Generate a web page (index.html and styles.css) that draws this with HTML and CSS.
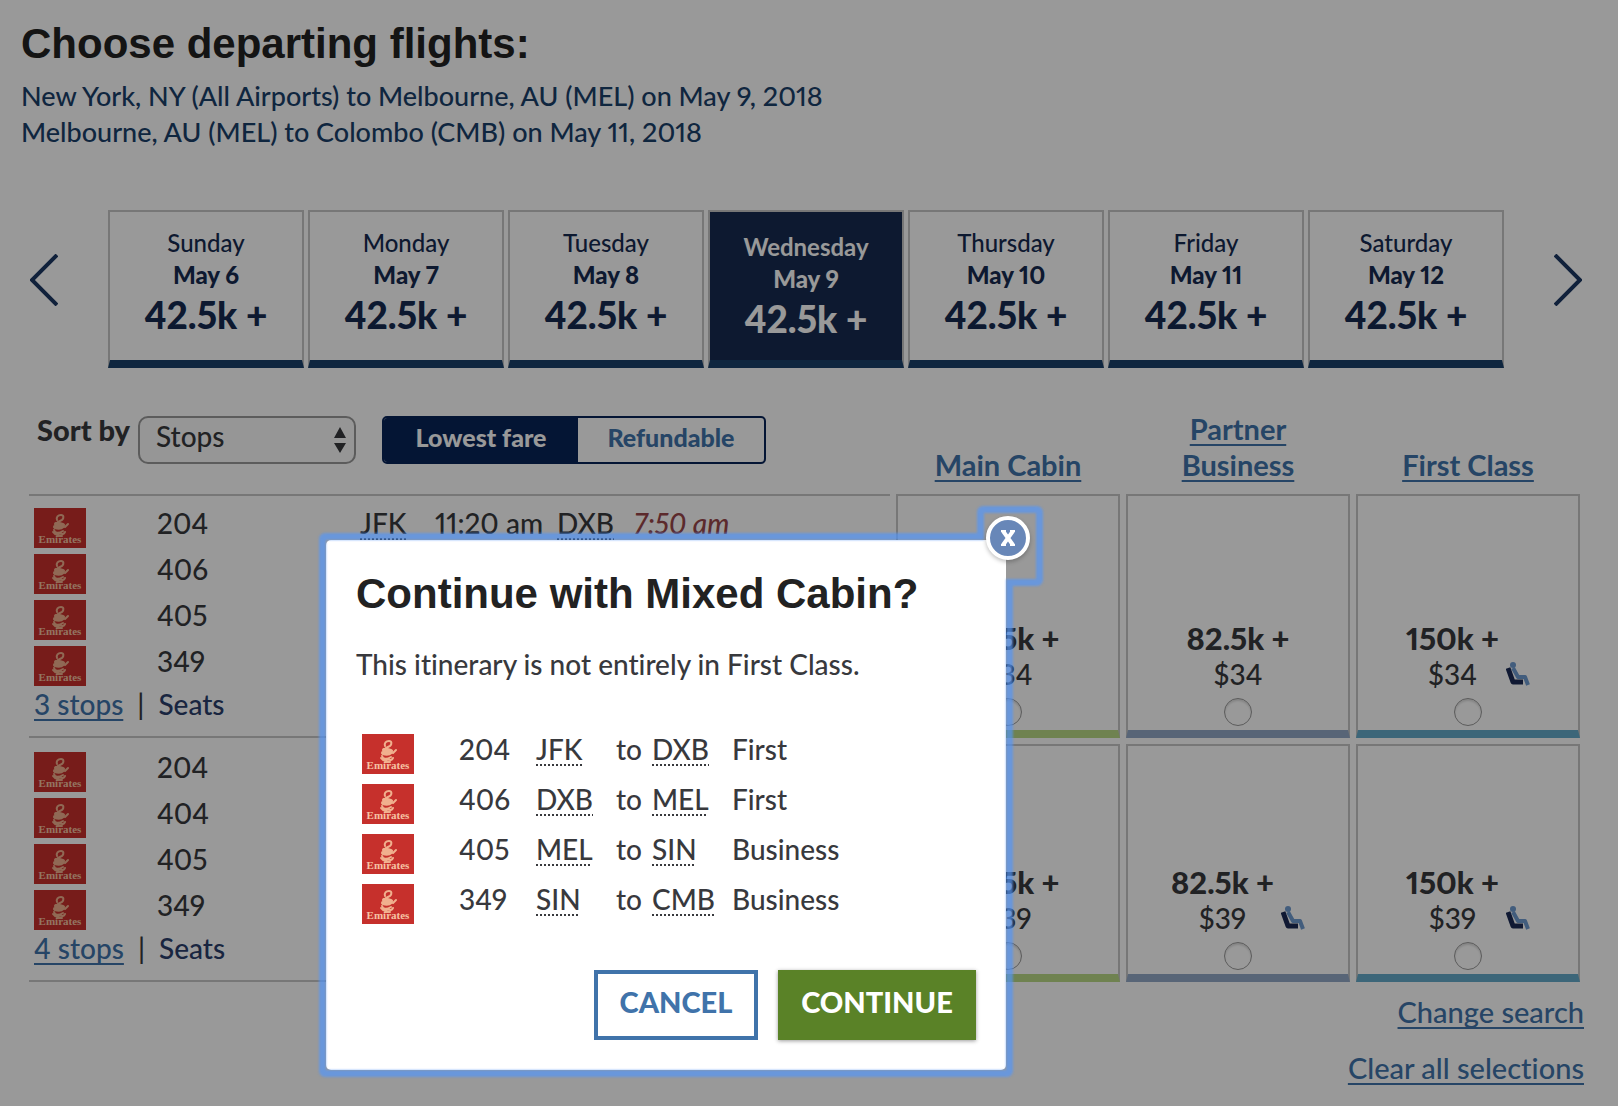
FILE: index.html
```html
<!DOCTYPE html>
<html lang="en">
<head>
<meta charset="utf-8">
<title>Choose departing flights</title>
<link rel="stylesheet" href="styles.css">
</head>
<body>
<svg class="sprite" aria-hidden="true">
  <symbol id="emirates" viewBox="0 0 52 40">
    <rect width="52" height="40" fill="#c6302c"/>
    <g fill="none" stroke="#f0b08e" stroke-linecap="round">
      <path d="M23 12c-1-3 1-5 4-5s3 3 1 5l-4 2" stroke-width="2"/>
      <path d="M22 16c3-1 5 0 7 1M21 19c3 1 6 1 8-1" stroke-width="4"/>
      <path d="M31 19l3-3M20 22c1 3 4 4 9 1M19 24c3 4 5 3 7 1c2 2 4 1 5-1M23 28h5" stroke-width="2"/>
    </g>
  </symbol>
  <symbol id="seat" viewBox="0 0 24 24">
    <path d="M2 6l5 14h10" fill="none" stroke="#1b2b55" stroke-width="5" stroke-linejoin="round"/>
    <circle cx="7" cy="3" r="3" fill="#6f9bd0"/>
    <path d="M7 6l5 9h7l3 8" fill="none" stroke="#6f9bd0" stroke-width="4" stroke-linejoin="round"/>
  </symbol>
</svg>

<main class="page">
  <header class="intro">
    <h1>Choose departing flights:</h1>
    <p>New York, NY (All Airports) to Melbourne, AU (MEL) on May 9, 2018<br>Melbourne, AU (MEL) to Colombo (CMB) on May 11, 2018</p>
  </header>

  <nav class="days" aria-label="Departure day">
    <button class="arrow" aria-label="Previous days"><svg width="28" height="52" viewBox="0 0 28 52"><path d="M27 1L2 26l25 25"/></svg></button>
    <div class="day-list">
      <button class="day"><span>Sunday</span><b>May 6</b><strong>42.5k +</strong></button>
      <button class="day"><span>Monday</span><b>May 7</b><strong>42.5k +</strong></button>
      <button class="day"><span>Tuesday</span><b>May 8</b><strong>42.5k +</strong></button>
      <button class="day selected"><span>Wednesday</span><b>May 9</b><strong>42.5k +</strong></button>
      <button class="day"><span>Thursday</span><b>May 10</b><strong>42.5k +</strong></button>
      <button class="day"><span>Friday</span><b>May 11</b><strong>42.5k +</strong></button>
      <button class="day"><span>Saturday</span><b>May 12</b><strong>42.5k +</strong></button>
    </div>
    <button class="arrow" aria-label="Next days"><svg width="28" height="52" viewBox="0 0 28 52"><path d="M1 1l25 25L1 51"/></svg></button>
  </nav>

  <table class="results">
    <thead>
      <tr>
        <td>
          <div class="controls">
            <label for="sort">Sort by</label>
            <div class="select">
              <select id="sort"><option>Stops</option></select>
              <svg width="14" height="26" viewBox="0 0 14 26"><path d="M7 0l6 11H1zM7 26l6-10H1z"/></svg>
            </div>
            <div class="toggle">
              <button class="on">Lowest fare</button><button>Refundable</button>
            </div>
          </div>
        </td>
        <th class="fare-col" scope="col"><a href="#">Main Cabin</a></th>
        <th class="fare-col" scope="col"><a href="#">Partner<br>Business</a></th>
        <th class="fare-col" scope="col"><a href="#">First Class</a></th>
      </tr>
    </thead>
    <tbody>
      <tr class="first">
        <td class="flight">
          <div class="leg"><svg class="logo" viewBox="0 0 52 40"><use href="#emirates"/><text x="26" y="35">Emirates</text></svg><span>204</span><span class="route"><abbr title="New York">JFK</abbr><span>11:20 am</span><abbr title="Dubai">DXB</abbr><em>7:50 am</em></span></div>
          <div class="leg"><svg class="logo" viewBox="0 0 52 40"><use href="#emirates"/><text x="26" y="35">Emirates</text></svg><span>406</span></div>
          <div class="leg"><svg class="logo" viewBox="0 0 52 40"><use href="#emirates"/><text x="26" y="35">Emirates</text></svg><span>405</span></div>
          <div class="leg"><svg class="logo" viewBox="0 0 52 40"><use href="#emirates"/><text x="26" y="35">Emirates</text></svg><span>349</span></div>
          <div class="more"><a href="#">3 stops</a><span>|</span><a class="seats" href="#">Seats</a></div>
        </td>
        <td class="fare main"><label><span class="price"><span class="amount"><b>42.5k +</b><span>$34</span></span></span><input type="radio" name="fare"></label></td>
        <td class="fare business"><label><span class="price"><span class="amount"><b>82.5k +</b><span>$34</span></span></span><input type="radio" name="fare"></label></td>
        <td class="fare top"><label><span class="price"><span class="amount"><b>150k +</b><span>$34</span></span><svg class="seat"><use href="#seat"/></svg></span><input type="radio" name="fare"></label></td>
      </tr>
      <tr>
        <td class="flight">
          <div class="leg"><svg class="logo" viewBox="0 0 52 40"><use href="#emirates"/><text x="26" y="35">Emirates</text></svg><span>204</span></div>
          <div class="leg"><svg class="logo" viewBox="0 0 52 40"><use href="#emirates"/><text x="26" y="35">Emirates</text></svg><span>404</span></div>
          <div class="leg"><svg class="logo" viewBox="0 0 52 40"><use href="#emirates"/><text x="26" y="35">Emirates</text></svg><span>405</span></div>
          <div class="leg"><svg class="logo" viewBox="0 0 52 40"><use href="#emirates"/><text x="26" y="35">Emirates</text></svg><span>349</span></div>
          <div class="more"><a href="#">4 stops</a><span>|</span><a class="seats" href="#">Seats</a></div>
        </td>
        <td class="fare main"><label><span class="price"><span class="amount"><b>42.5k +</b><span>$39</span></span></span><input type="radio" name="fare"></label></td>
        <td class="fare business"><label><span class="price"><span class="amount"><b>82.5k +</b><span>$39</span></span><svg class="seat"><use href="#seat"/></svg></span><input type="radio" name="fare"></label></td>
        <td class="fare top"><label><span class="price"><span class="amount"><b>150k +</b><span>$39</span></span><svg class="seat"><use href="#seat"/></svg></span><input type="radio" name="fare"></label></td>
      </tr>
    </tbody>
  </table>

  <footer class="actions">
    <a href="#">Change search</a>
    <a href="#">Clear all selections</a>
  </footer>
</main>

<div class="backdrop"></div>
<section class="modal" role="dialog" aria-modal="true" aria-labelledby="modal-title">
  <div class="focus-ring" aria-hidden="true"><i class="frame"></i><i class="corner"></i></div>
  <button class="close" aria-label="Close"><svg width="16" height="16" viewBox="0 0 16 16"><path d="M3 1l10 14M13 1L3 15" stroke-width="4"/><path d="M1 1h5M10 1h5M1 15h5M10 15h5" stroke-width="2"/></svg></button>
  <h2 id="modal-title">Continue with Mixed Cabin?</h2>
  <p>This itinerary is not entirely in First Class.</p>
  <table class="cabins">
    <tr><td><svg class="logo" viewBox="0 0 52 40"><use href="#emirates"/><text x="26" y="35">Emirates</text></svg></td><td>204</td><td><abbr title="New York">JFK</abbr></td><td>to</td><td><abbr title="Dubai">DXB</abbr></td><td>First</td></tr>
    <tr><td><svg class="logo" viewBox="0 0 52 40"><use href="#emirates"/><text x="26" y="35">Emirates</text></svg></td><td>406</td><td><abbr title="Dubai">DXB</abbr></td><td>to</td><td><abbr title="Melbourne">MEL</abbr></td><td>First</td></tr>
    <tr><td><svg class="logo" viewBox="0 0 52 40"><use href="#emirates"/><text x="26" y="35">Emirates</text></svg></td><td>405</td><td><abbr title="Melbourne">MEL</abbr></td><td>to</td><td><abbr title="Singapore">SIN</abbr></td><td>Business</td></tr>
    <tr><td><svg class="logo" viewBox="0 0 52 40"><use href="#emirates"/><text x="26" y="35">Emirates</text></svg></td><td>349</td><td><abbr title="Singapore">SIN</abbr></td><td>to</td><td><abbr title="Colombo">CMB</abbr></td><td>Business</td></tr>
  </table>
  <div class="modal-actions">
    <button class="cancel">CANCEL</button>
    <button class="continue">CONTINUE</button>
  </div>
</section>
</body>
</html>
```
FILE: styles.css
```css
:root {
  --ink: #38393d;
  --navy: #162b50;
  --blue: #19406a;
  --link: #4073aa;
  --line: #c6c6c6;
}

* { box-sizing: border-box; }

body {
  margin: 0;
  background: #fff;
  color: var(--ink);
  font: 500 28px/36px Lato, "Open Sans", sans-serif;
  font-variant-ligatures: none;
  font-variant-numeric: proportional-nums;
}

button, select { font: inherit; cursor: pointer; }
a { color: var(--link); text-underline-offset: 4px; text-decoration-thickness: 2px; text-decoration-skip-ink: none; }
p, h1, h2 { margin: 0; }
h1, h2 { color: #222; font: bold 42px/48px "Liberation Sans", Arial, sans-serif; }
abbr { text-decoration: underline dotted 2px; text-underline-offset: 4px; text-decoration-skip-ink: none; }

.sprite { display: none; }
.logo { display: block; width: 52px; height: 40px; }
.logo text { font: bold 11px "Liberation Serif", serif; fill: #f6c3a4; text-anchor: middle; }

/* Heading and day picker */
.intro { padding: 20px 21px 0; }
.intro p { margin-top: 10px; color: var(--blue); font-size: 27px; }

.days { display: flex; align-items: center; gap: 50px; margin-top: 60px; padding: 0 36px 0 30px; }
.arrow { width: 28px; height: 52px; padding: 0; border: 0; background: none; margin-bottom: 18px; }
.arrow svg { display: block; fill: none; stroke: #1c3763; stroke-width: 4px; }
.day-list { flex: 1; display: grid; grid-template-columns: repeat(7, 1fr); gap: 4px; }
.day {
  display: flex; flex-direction: column; align-items: center;
  height: 158px; padding: 15px 0 0;
  border: 2px solid var(--line); border-bottom: 8px solid var(--blue);
  background: none; color: var(--navy); font-size: 24px; line-height: 32px;
}
.day strong { font-size: 37px; line-height: 48px; font-weight: 900; }
.day b { font-weight: 900; }
.day.selected { padding-top: 19px; background: var(--navy); color: #fff; font-weight: bold; }

/* Results */
.results { width: calc(100% - 55px); margin: 37px 32px 0 23px; border-spacing: 6px; table-layout: fixed; }
.results td, .results th { padding: 0; vertical-align: top; }
.fare-col { width: 224px; }
.results th { padding-bottom: 5px; vertical-align: bottom; font-size: 29px; }

.controls { display: flex; align-items: flex-start; padding: 5px 0 0 8px; }
.controls label { width: 101px; font-size: 29px; font-weight: 900; line-height: 28px; white-space: nowrap; }
.select { position: relative; width: 218px; margin-right: 26px; }
.select select {
  display: block; width: 100%; height: 48px; padding: 0 40px 8px 16px;
  appearance: none; border: 2px solid #999; border-radius: 10px; background: #fafafa; color: var(--ink);
}
.select svg { position: absolute; right: 9px; top: 11px; fill: var(--ink); pointer-events: none; }
.toggle { display: flex; width: 384px; height: 48px; border: 2px solid #072358; border-radius: 5px; overflow: hidden; }
.toggle button { flex: 1; padding: 0 0 6px; border: 0; background: none; color: var(--link); font-size: 25px; font-weight: 900; line-height: 32px; }
.toggle .on { flex: 0 0 194px; background: #072358; color: #fff; }

.flight { border-bottom: 2px solid var(--line); }
.results .flight { padding: 8px 5px 0; }
.results .first .flight { padding-top: 12px; border-top: 2px solid var(--line); }
.leg { display: grid; grid-template-columns: 123px 203px 1fr; height: 40px; margin-bottom: 6px; line-height: 30px; }
.leg:nth-child(4) { margin-bottom: 0; }
.route { display: grid; grid-template-columns: 75px 122px 77px 1fr; }
.route em { color: #99464a; }
.more { display: flex; gap: 14px; }
.seats { color: #2b3e6b; text-decoration: none; }

.fare { height: 238px; border: 2px solid var(--line); border-bottom-width: 8px; }
.first .fare { height: 244px; }
.results .fare { padding-bottom: 4px; vertical-align: bottom; }
.fare.main { border-bottom-color: #b9d985; }
.fare.business { border-bottom-color: #93a8c6; }
.fare.top { border-bottom-color: #64aaca; }
.fare label { display: flex; flex-direction: column; align-items: center; gap: 6px; }
.price { display: flex; align-items: flex-end; gap: 7px; }
.amount { display: flex; flex-direction: column; align-items: center; white-space: nowrap; }
.amount b { font-size: 31px; font-weight: 900; }
.seat { width: 24px; height: 24px; margin-bottom: 6px; }
.fare input {
  width: 28px; height: 28px; margin: 0; appearance: none;
  border: 1px solid #999; border-radius: 50%; box-shadow: inset 0 2px 2px #ddd;
}

.actions { display: flex; flex-direction: column; align-items: flex-end; gap: 20px; padding: 6px 34px 12px; font-size: 29px; }

/* Mixed cabin dialog */
.backdrop { position: fixed; inset: 0; background: rgba(0, 0, 0, .4); }
.modal {
  position: absolute; top: 540px; left: 326px; width: 680px; padding: 30px;
  border-radius: 5px; background: #fff;
}
.modal p { margin-top: 28px; }

.focus-ring { position: absolute; inset: -7px; filter: blur(1px); pointer-events: none; }
.frame, .corner { position: absolute; border: 7px solid rgba(82, 150, 250, .68); border-radius: 6px; }
.frame {
  inset: 0;
  clip-path: polygon(0 0, calc(100% - 36px) 0, calc(100% - 36px) 53px, 100% 53px, 100% 100%, 0 100%);
}
.corner {
  top: -27px; right: -30px; width: 66px; height: 80px;
  clip-path: polygon(0 0, 100% 0, 100% 100%, 29px 100%, 29px 34px, 0 34px);
}
.close {
  position: absolute; top: -24px; right: -24px; width: 44px; height: 44px;
  display: grid; place-items: center; padding: 0;
  border: 4px solid #fff; border-radius: 50%; background: #6887b8; box-shadow: 0 2px 4px rgba(0, 0, 0, .25);
}
.close svg { fill: none; stroke: #fff; }

.cabins { margin: 52px 0 0 6px; border-collapse: collapse; line-height: 30px; }
.cabins td { width: 80px; height: 50px; padding: 0; vertical-align: top; }
.cabins td:nth-child(1) { width: 97px; }
.cabins td:nth-child(2) { width: 77px; }
.cabins td:nth-child(4) { width: 36px; }

.modal-actions { display: flex; justify-content: flex-end; gap: 20px; margin-top: 36px; }
.modal-actions button { height: 70px; padding: 0 0 6px; border: 0; font-size: 29px; font-weight: 900; }
.modal-actions .cancel { width: 164px; border: 4px solid var(--link); background: #fff; color: var(--link); }
.modal-actions .continue { width: 198px; background: #5a8227; color: #fff; box-shadow: 0 1px 4px rgba(0, 0, 0, .4); }
```
